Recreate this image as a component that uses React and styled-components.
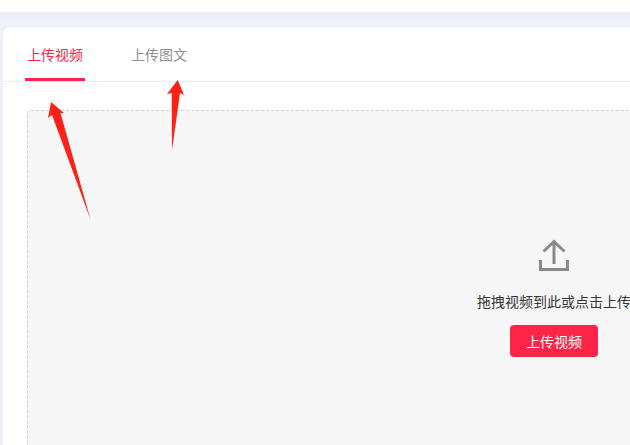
import styled, { createGlobalStyle } from 'styled-components';

const GlobalStyle = createGlobalStyle`
  html, body {
    margin: 0;
    padding: 0;
    background: #fff;
    overflow: hidden;
  }
  body {
    font-family: "Noto Sans CJK SC", "Liberation Sans", sans-serif;
  }
`;

const Page = styled.div`
  position: relative;
  width: 630px;
  height: 445px;
  overflow: hidden;
  background: #fff;
`;

const TopBar = styled.div`
  height: 12px;
  background: #fff;
`;

const Content = styled.div`
  height: 433px;
  padding: 15px 0 0 3px;
  box-sizing: border-box;
  background: linear-gradient(#eaedf6, #eff1f9 10px);
`;

const Card = styled.div`
  width: 1100px;
  height: 600px;
  background: #fff;
  border-radius: 7px;
`;

const Tabs = styled.div`
  display: flex;
  gap: 44px;
  height: 55px;
  padding-left: 22px;
  box-sizing: border-box;
  border-bottom: 1px solid #eeeeee;
`;

const Tab = styled.div`
  width: 60px;
  height: 54px;
  box-sizing: border-box;
  padding-top: 17px;
  font-size: 14px;
  line-height: 20px;
  text-align: center;
  color: ${(p) => (p.$active ? '#fe2448' : '#8f8f8f')};
  border-bottom: 3px solid ${(p) => (p.$active ? '#fe2448' : 'transparent')};
`;

const Body = styled.div`
  padding: 28px 24px 0;
`;

const DropZone = styled.div`
  width: 1054px;
  height: 500px;
  box-sizing: border-box;
  padding-top: 128px;
  display: flex;
  flex-direction: column;
  align-items: center;
  background: #f7f7f7;
  border: 1px dashed #d4d4d4;
  border-radius: 4px;
`;

const UploadIcon = styled.svg`
  display: block;
  width: 30px;
  height: 32px;
`;

const Hint = styled.div`
  margin-top: 20px;
  font-size: 14px;
  line-height: 20px;
  color: #333;
  white-space: nowrap;
`;

const UploadButton = styled.button`
  margin-top: 14px;
  width: 88px;
  height: 32px;
  padding: 0;
  border: none;
  border-radius: 4px;
  background: #fe2448;
  color: #fff;
  font-family: inherit;
  font-size: 14px;
  line-height: 32px;
`;

const Arrows = styled.svg`
  position: absolute;
  left: 0;
  top: 0;
  pointer-events: none;
`;

export default function App() {
  return (
    <Page>
      <GlobalStyle />
      <TopBar />
      <Content>
        <Card>
          <Tabs>
            <Tab $active>上传视频</Tab>
            <Tab>上传图文</Tab>
          </Tabs>
          <Body>
            <DropZone>
              <UploadIcon viewBox="0 0 30 32" fill="none" stroke="#8a8a8a" strokeWidth="3">
                <path d="M15 25V2.5M4.5 12.5L15 2.5l10.5 10" />
                <path d="M1.5 21v9.5h27V21" />
              </UploadIcon>
              <Hint>拖拽视频到此或点击上传</Hint>
              <UploadButton>上传视频</UploadButton>
            </DropZone>
          </Body>
        </Card>
      </Content>
      <Arrows width="630" height="445" viewBox="0 0 630 445" fill="#ff2018">
        <path d="M51 102L64 113L60.5 113L90.5 219.5L52 115L48 118Z" />
        <path d="M177.7 80L184 95L180 93L172 150L171.7 93L167 94Z" />
      </Arrows>
    </Page>
  );
}
